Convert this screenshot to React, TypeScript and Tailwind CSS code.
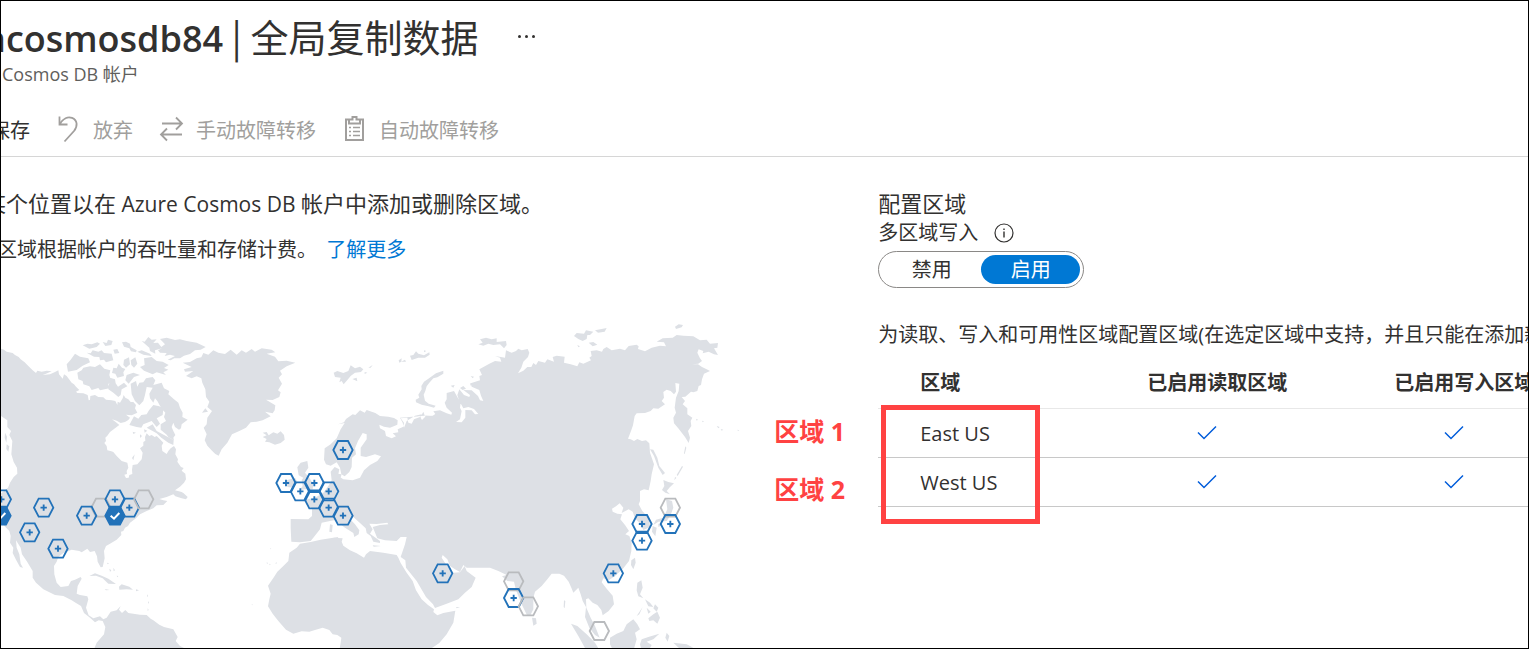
import React from 'react';

type MarkerKind = 'available' | 'selected' | 'unavailable';

interface Marker {
  x: number;
  y: number;
  kind: MarkerKind;
}

// Map coordinates are in thirds of a pixel, origin at the map's top left corner.
const markers: Marker[] = [
  { x: 303, y: 560, kind: 'unavailable' },
  { x: 131, y: 560, kind: 'available' },
  { x: 89, y: 634, kind: 'available' },
  { x: 174, y: 683, kind: 'available' },
  { x: 260, y: 584, kind: 'available' },
  { x: 345, y: 535, kind: 'available' },
  { x: 388, y: 560, kind: 'available' },
  { x: 431, y: 535, kind: 'unavailable' },
  { x: 345, y: 584, kind: 'selected' },
  { x: 4, y: 535, kind: 'available' },
  { x: 3, y: 584, kind: 'selected' },
  { x: 1029, y: 387, kind: 'available' },
  { x: 858, y: 486, kind: 'available' },
  { x: 943, y: 486, kind: 'available' },
  { x: 901, y: 511, kind: 'available' },
  { x: 986, y: 511, kind: 'available' },
  { x: 943, y: 535, kind: 'available' },
  { x: 986, y: 560, kind: 'available' },
  { x: 1029, y: 584, kind: 'available' },
  { x: 1328, y: 757, kind: 'available' },
  { x: 2011, y: 560, kind: 'unavailable' },
  { x: 2011, y: 609, kind: 'available' },
  { x: 1926, y: 609, kind: 'available' },
  { x: 1926, y: 659, kind: 'available' },
  { x: 1840, y: 757, kind: 'available' },
  { x: 1541, y: 781, kind: 'unavailable' },
  { x: 1541, y: 831, kind: 'available' },
  { x: 1585, y: 856, kind: 'unavailable' },
  { x: 1798, y: 930, kind: 'unavailable' },
];

function RegionMarker({ x, y, kind }: Marker) {
  const hex = '-29,0 -15,-27 15,-27 29,0 15,27 -15,27';
  return (
    <g transform={`translate(${x} ${y})`}>
      <polygon
        points={hex}
        fill={kind === 'selected' ? '#2272b9' : 'none'}
        stroke={kind === 'unavailable' ? '#b9bbbe' : '#2272b9'}
        strokeWidth="5.5"
      />
      {kind === 'available' && <path d="M-9.5 0H9.5M0-9.5V9.5" stroke="#2272b9" strokeWidth="5.5" />}
      {kind === 'selected' && <path d="M-13 0L-3 9L13-8" fill="none" stroke="#fff" strokeWidth="6" />}
    </g>
  );
}

function WorldMap() {
  return (
    <svg viewBox="3 0 2280 984" className="block w-[760px] max-w-none shrink-0" role="img" aria-label="世界地图">
      <g fill="#dde0e5">
        {/* North and South America */}
        <path d="M0 82L12 86 20 92 38 96 45 102 56 108 62 115 74 124 85 135 98 148 108 156 112 149 125 152 140 149 155 151 138 158 128 162 150 160 165 153 175 148 177 160 188 173 192 160 200 165 205 172 215 185 222 190 228 197 238 207 228 212 232 216 250 217 263 222 266 238 270 237 271 225 285 222 295 228 310 229 318 236 335 238 346 240 352 252 353 242 360 245 368 232 371 222 376 230 385 235 392 243 400 243 408 252 405 262 412 275 402 280 395 283 378 281 390 290 385 297 375 303 362 306 350 299 336 295 348 304 358 312 345 322 330 333 322 344 316 350 318 360 313 366 320 375 322 388 334 391 340 393 350 405 365 420 382 425 385 440 380 450 381 459 373 461 378 471 386 470 388 462 397 459 396 446 398 432 412 430 425 415 428 395 420 382 430 374 430 363 436 359 435 348 440 337 448 345 455 342 464 348 470 345 480 355 490 365 485 374 487 390 500 399 505 390 512 382 522 375 528 385 526 400 534 415 532 422 543 438 551 441 545 449 556 458 558 475 552 485 540 497 525 508 545 513 551 517 563 528 558 535 545 532 526 526 520 520 500 528 478 534 490 538 502 540 490 552 470 553 460 562 440 570 420 580 408 592 390 605 384 615 375 620 370 630 363 632 364 642 350 656 330 668 318 675 312 690 314 712 308 738 302 739 293 722 291 706 284 690 270 693 262 683 245 694 238 690 215 686 190 696 175 708 170 722 162 735 163 760 170 785 182 798 205 795 213 780 225 776 242 768 245 773 233 795 230 818 240 822 262 826 265 835 258 860 266 883 280 892 300 886 310 895 320 890 332 872 350 868 362 855 357 866 366 876 376 867 385 876 400 878 420 881 440 882 452 893 460 898 478 911 492 918 520 925 533 948 527 960 540 975 556 983 580 990 280 990 290 965 312 940 316 918 308 900 296 898 285 904 270 890 252 876 243 855 228 846 215 838 190 825 165 822 130 805 108 785 98 770 98 750 80 720 66 700 62 680 48 658 50 680 58 700 62 728 69 740 60 738 48 716 38 696 40 680 30 665 32 645 28 630 16 618 0 600V520L24 500 30 485 41 468 52 458 51 440 41 423 34 400 37 360 28 342 33 330 22 318 22 298 12 291 0 283Z" />
        {/* Canadian Arctic */}
        <path d="M200 130L212 116 225 98 240 107 265 112 270 124 248 134 230 147 204 152ZM232 155L245 148 250 140 270 136 285 138 300 130 313 143 331 148 328 162 333 178 325 190 328 202 300 208 295 201 275 207 268 196 250 190 248 180 235 175ZM248 73L262 68 275 70 292 64 300 68 290 78 268 83ZM260 95L272 97 278 88 295 92 305 88 312 96 335 98 340 118 331 120 318 124 312 116 300 118 298 108 282 107ZM308 63L320 66 324 56 338 60 334 72 316 75ZM366 64L378 62 390 68 392 78 410 88 408 94 393 91 388 82 372 77ZM372 116L387 109 390 130 378 140 370 132ZM340 140L350 142 356 128 366 140 376 144 370 154 372 165 352 170 346 158 336 156ZM392 118L406 109 412 128 402 140 394 132ZM425 60L434 62 445 48 455 56 470 55 460 66 474 65 484 78 495 70 480 54 500 50 525 57 540 55 560 60 590 65 617 78 602 86 585 88 570 99 552 104 540 112 523 112 512 118 503 116 525 105 510 101 494 105 500 96 480 95 474 88 486 82 465 88 466 98 450 90 448 80ZM412 92L425 88 450 98 455 105 430 101ZM432 112L455 108 470 120 488 122 506 132 492 141 505 146 490 154 498 162 470 154 458 160 432 149 420 138 434 132ZM380 162L400 155 420 162 402 168 386 188 376 178ZM392 188L408 180 412 197 418 185 430 184 438 172 458 168 466 178 460 192 485 185 492 202 508 210 505 220 522 235 535 245 540 260 548 275 547 288 563 296 545 310 543 322 537 326 525 318 520 305 515 318 520 330 526 342 520 350 522 358 505 348 500 341 482 326 482 310 498 300 492 288 496 275 484 262 472 240 465 232 460 245 450 232 448 218 458 200 440 198 435 222 430 240 418 253 405 240 395 220ZM447 268L460 252 478 256 490 264 488 282 470 292 480 308 470 318 455 300 430 310 424 320 410 318 388 312 402 286 415 293 424 282 440 280ZM440 320L458 310 470 330 488 340 508 350 521 358 520 372 505 365 484 350 470 337ZM330 170L345 175 347 187 354 197 372 185 382 196 365 205 362 222 355 228 340 215 325 205ZM340 86L352 84 358 96 344 98ZM404 400L396 411 400 418Z" />
        <path d="M398 332l10 3-8 4zM420 340l6 5-6 6zM432 325l10 4-8 6zM15 335l6 12-2 18-5-15zM20 370l8 6-3 16-6-8z" />
        {/* Caribbean */}
        <path d="M268 765L285 757 305 764 325 773 348 789 325 788 308 772 288 764ZM357 797L365 790 388 797 399 806 380 805 358 806ZM314 804L329 807 318 808ZM408 805L417 808 408 811ZM321 725l6 2-4 3zM328 743l6 5-4 5zM340 740l5 8-4 3zM350 764l5 1-3 4zM441 820l3 5-3 3zM444 840l3 5-3 3zM443 862l3 5-3 3z" />
        {/* Greenland and Iceland */}
        <path d="M548 125L570 123 590 112 604 109 610 96 625 101 640 88 655 95 675 99 692 86 710 101 725 88 738 95 755 84 765 92 785 82 815 86 826 94 800 98 825 107 835 121 860 119 886 125 860 136 840 149 846 160 836 170 846 188 834 208 842 214 838 228 818 237 798 236 826 253 824 268 818 277 795 272 812 286 788 298 770 302 752 304 738 320 718 330 696 340 682 365 665 385 656 404 646 399 636 389 622 374 614 358 620 340 611 320 620 310 622 290 636 270 622 258 628 242 618 228 616 205 607 185 604 172 590 166 575 172 558 165 580 150 555 152 552 145 575 138Z M606 275L616 262 624 272Z M788 335L800 333 806 343 820 334 832 338 842 331 852 342 854 356 842 366 825 371 808 364 795 362 800 354 788 348 800 343Z" />
        {/* Arctic Ocean islands */}
        <path d="M1001 155L1012 150 1030 156 1045 150 1052 133 1065 142 1080 137 1090 145 1083 153 1065 155 1052 165 1044 175 1031 190 1025 180 1018 184 1022 170 1005 168ZM1057 174L1070 170 1072 181ZM1105 140L1118 132 1112 140ZM1094 153L1102 155 1094 159ZM1196 118L1205 112 1204 122 1218 122 1215 116 1198 125ZM1230 104L1240 102 1248 91 1255 98 1272 103 1288 94 1289 101 1275 110 1255 110 1235 117ZM1272 88L1279 90 1272 94ZM1330 149L1330 158 1312 169 1300 172 1288 185 1280 196 1276 210 1271 221 1275 239 1286 248 1307 254 1302 260 1286 256 1265 251 1248 244 1247 236 1258 230 1255 221 1265 205 1264 195 1272 182 1285 173 1308 157ZM1435 70L1448 65 1440 55 1458 50 1475 55 1490 52 1490 63 1518 60 1520 72 1512 82 1500 70 1480 72 1465 68 1450 74ZM1722 45L1730 36 1752 38 1758 28 1780 32 1770 42 1762 42 1760 54 1748 60 1735 54ZM1785 28L1805 24 1820 21 1814 32 1794 35ZM1766 65L1780 63 1792 71 1778 76ZM2025 17L2036 10 2049 12 2045 19 2028 24ZM1352 194l12-2-4 8zM1380 201l10-6 8 8-10 4zM1410 187l8 2-6 5zM1412 165l10 2-4 5zM1732 72l8 4-5 3z" />
        {/* Europe and Asia */}
        <path d="M1014 310L1032 304 1038 294 1058 280 1066 282 1080 268 1094 275 1100 267 1115 272 1126 276 1140 285 1165 287 1182 291 1193 298 1192 311 1170 320 1152 317 1138 311 1140 322 1155 330 1158 345 1175 352 1188 346 1178 337 1195 334 1193 325 1210 317 1212 305 1202 292 1222 290 1225 305 1235 308 1242 295 1262 287 1270 272 1275 286 1292 283 1200 290 1208 305 1212 320 1220 300 1245 284 1265 280 1262 290 1266 297 1278 285 1298 284 1306 279 1300 271 1320 268 1340 277 1354 281 1356 275 1340 260 1334 245 1340 235 1340 216 1362 210 1372 228 1382 245 1380 260 1385 270 1380 295 1368 303 1385 304 1396 290 1396 267 1415 268 1425 280 1435 279 1422 264 1405 258 1390 262 1378 240 1372 222 1378 205 1392 222 1408 228 1410 222 1390 207 1415 208 1434 225 1440 238 1450 240 1443 224 1438 207 1415 197 1412 187 1440 178 1438 165 1446 162 1438 145 1468 128 1485 120 1504 122 1500 110 1485 105 1515 110 1518 88 1535 95 1548 90 1555 83 1565 88 1583 84 1588 95 1584 108 1570 122 1564 140 1554 157 1570 149 1582 138 1594 138 1600 126 1608 132 1615 120 1635 125 1642 115 1662 122 1658 108 1670 104 1694 107 1692 125 1712 130 1732 136 1738 124 1750 128 1773 118 1768 110 1775 105 1772 90 1790 88 1806 92 1810 84 1820 78 1835 88 1860 83 1875 88 1886 75 1910 71 1916 76 1914 84 1935 91 1955 80 1980 74 1998 76 1992 64 1970 62 1988 52 2018 50 2030 42 2050 44 2080 46 2100 58 2120 56 2130 68 2154 66 2152 80 2142 82 2154 102 2142 100 2126 92 2108 97 2110 90 2096 85 2092 95 2100 112 2106 120 2095 128 2076 130 2094 130 2106 138 2120 145 2130 150 2112 158 2106 175 2103 192 2096 195 2092 210 2080 214 2073 212 2056 227 2045 228 2055 240 2048 250 2062 262 2062 280 2077 290 2072 300 2074 315 2064 330 2070 350 2066 366 2055 348 2036 323 2022 307 2020 290 2028 275 2024 260 2028 230 2036 210 2038 188 2026 186 2028 212 2022 220 2012 210 2000 206 1990 213 1992 230 1985 240 1995 250 1975 263 1960 262 1952 270 1935 276 1910 277 1904 285 1899 313 1893 330 1884 353 1892 355 1902 360 1912 354 1926 360 1938 358 1948 367 1950 395 1962 430 1955 460 1952 480 1946 508 1932 505 1920 510 1920 540 1916 550 1927 570 1945 590 1951 618 1930 627 1922 610 1905 592 1898 572 1886 565 1865 576 1870 560 1859 547 1848 556 1836 563 1838 572 1852 578 1866 580 1861 595 1875 612 1887 630 1876 640 1888 645 1895 665 1894 690 1887 720 1870 742 1845 765 1826 778 1810 772 1805 784 1820 803 1838 824 1842 850 1826 870 1808 883 1804 867 1792 852 1778 845 1765 832 1758 835 1759 860 1772 890 1785 915 1799 950 1785 942 1768 920 1755 888 1758 858 1748 840 1742 820 1735 800 1720 815 1714 800 1706 782 1692 764 1678 758 1655 758 1642 775 1625 795 1605 812 1600 830 1600 865 1590 885 1581 883 1565 850 1548 808 1542 782 1522 780 1506 766 1520 762 1495 750 1470 740 1400 740 1390 732 1380 753 1365 745 1350 735 1342 715 1328 702 1325 710 1340 733 1360 755 1380 754 1394 735 1400 750 1427 770 1415 798 1395 815 1375 835 1340 848 1305 861 1299 850 1278 828 1250 780 1218 740 1216 718 1202 708 1215 670 1220 648 1202 648 1190 660 1155 658 1132 652 1124 632 1118 618 1140 612 1165 610 1162 605 1130 609 1108 608 1118 625 1110 638 1140 660 1140 666 1120 662 1112 645 1100 636 1097 622 1080 606 1060 588 1050 594 1065 610 1078 628 1076 640 1063 648 1060 636 1035 620 1015 605 1002 598 990 600 965 605 960 625 940 650 932 660 900 664 874 662 872 620 872 594 925 595 936 585 936 562 918 550 915 536 945 530 970 515 985 495 995 478 992 452 1004 438 1018 445 1014 464 1030 475 1058 478 1080 470 1092 448 1110 432 1132 420 1143 406 1125 400 1098 408 1082 405 1082 380 1100 355 1100 340 1088 336 1074 360 1065 382 1068 400 1056 410 1055 438 1048 453 1034 466 1024 460 1020 440 1010 424 992 434 978 430 972 416 974 382 992 370 1010 352 1022 325 1034 306Z" />
        <path d="M892 439L902 425 922 420 925 440 915 455 928 470 940 490 938 505 915 505 898 508 908 495 905 478 910 470 896 463ZM860 478L885 470 892 482 880 500 862 498ZM1013 458l12 2-4 12-9-4zM1000 650l15-2-4 8zM1118 673l25 2-22 2zM990 610l8 2-2 22-8-2z" />
        {/* Africa */}
        <path d="M1195 710L1202 726 1220 755 1238 780 1248 808 1265 835 1284 852 1302 865 1300 873 1312 883 1330 876 1366 869 1360 905 1340 940 1318 966 1290 985 1018 990 1022 965 1024 950 1012 942 998 940 988 927 968 920 945 927 928 932 905 931 880 938 858 926 835 900 818 878 804 856 808 835 812 818 804 794 822 768 832 752 850 735 865 720 868 695 890 680 900 668 932 663 962 656 1000 650 1028 652 1025 662 1030 674 1050 688 1070 697 1092 710 1098 700 1110 690 1150 695 1190 702ZM1368 858L1380 859 1370 862ZM810 682l4 1-3 2zM800 724l4 2-3 3zM808 728l4 2-3 3zM826 727l4-4-1 6zM755 850l4 1-3 2z" />
        {/* Pacific coast islands and South-East Asia */}
        <path d="M1950 385L1960 386 1972 410 1978 435 1995 456 1988 462 1975 440 1962 405ZM1990 477L2005 483 2022 487 2010 498 2000 510 2010 520 1996 515 1986 507 1993 495ZM1998 535L2016 540 2020 560 2012 582 2000 600 1975 602 1960 612 1968 596 1990 590 2002 565ZM1958 615L1970 620 1966 646 1956 632ZM1975 608L1988 612 1975 618ZM1894 718L1905 710 1907 725 1900 745 1893 732ZM1912 785L1924 778 1928 800 1920 820 1930 832 1915 826 1910 808ZM1935 835L1950 845 1960 858 1945 856ZM1940 860L1952 872 1945 878ZM1965 850L1975 860 1970 872 1960 862ZM1945 892L1960 880 1972 872 1980 890 1972 908 1960 898 1948 900ZM1910 885L1928 858 1918 880ZM1713 908L1732 915 1760 940 1785 965 1800 990 1760 990 1735 945ZM1830 950L1850 938 1870 930 1880 910 1900 895 1912 910 1920 925 1905 935 1910 955 1900 990 1840 990 1830 970ZM1925 955L1945 948 1965 942 1978 938 1960 955 1940 962 1955 972 1945 990 1925 990 1920 970ZM2000 935L2008 945 2003 962 1996 950ZM2020 965L2060 970 2080 980 2040 984ZM1596 890L1608 892 1610 908 1600 914ZM1692 838l4 2-2 22-3-4zM2088 293l6 3-4 3zM2106 299l6 2-4 3zM2150 315l9 3-4 4zM2162 324l8 2-5 3zM2212 326l6 2-4 2zM2056 376l3 4-5 20-2-3zM2046 435l3 2-16 28-3-3zM2025 468l4 2-6 8z" />
      </g>
      {markers.map((m) => (
        <RegionMarker key={`${m.x}-${m.y}`} {...m} />
      ))}
    </svg>
  );
}

function CommandBar() {
  const item = 'flex items-center whitespace-nowrap text-xl leading-7 text-[#a19f9d]';
  return (
    <div className="-ml-[11px] flex h-14 items-center border-b border-[#d6d6d6]">
      <button type="button" className="pt-1 text-xl leading-7 whitespace-nowrap text-[#323130]">
        保存
      </button>
      <button type="button" disabled className={`ml-[25px] gap-3 ${item}`}>
        <svg viewBox="0 0 26 28" className="h-7 w-[26px]" fill="none" stroke="currentColor" strokeWidth="1.8" aria-hidden="true">
          <path d="M4.5 1.5V9.500H12.500M4.700 9.300C8 3 13 1.500 17 2.800C22.500 5 23 11 19 16L9.500 26.500" />
        </svg>
        <span className="pt-1">放弃</span>
      </button>
      <button type="button" disabled className={`ml-[25px] gap-3 ${item}`}>
        <svg viewBox="0 0 26 28" className="h-7 w-[26px]" fill="none" stroke="currentColor" strokeWidth="1.8" aria-hidden="true">
          <path d="M4 8.500H24M18 2.500L24 8.500L18 14.500M24 19.500H3M9 13.500L3 19.500L9 25.500" />
        </svg>
        <span className="pt-1">手动故障转移</span>
      </button>
      <button type="button" disabled className={`ml-[25px] gap-3 ${item}`}>
        <svg viewBox="0 0 26 28" className="h-7 w-[26px]" fill="none" stroke="currentColor" strokeWidth="2" aria-hidden="true">
          <path d="M8 4.500H5V25H22V4.500H19M8 8.500V4.500H11.500V2H15.500V4.500H19V8.500Z" />
          <path d="M8 12.500H10M12 12.500H19M8 16.500H10M12 16.500H19M8 20.500H10M12 20.500H19" strokeWidth="1.500" />
        </svg>
        <span className="pt-1">自动故障转移</span>
      </button>
    </div>
  );
}

function Check({ label }: { label: string }) {
  return (
    <svg viewBox="0 0 20 16" className="ml-[50px] block h-4 w-5" fill="none" stroke="#015cda" strokeWidth="1.5" role="img" aria-label={label}>
      <path d="M1 7.500L7 13.500L19 1.500" />
    </svg>
  );
}

const regions = ['East US', 'West US'];

function RegionTable() {
  return (
    <div className="relative mt-[9px]">
      <table className="w-[1009px] table-fixed border-collapse text-left text-xl leading-7 text-[#323130]">
        <thead>
          <tr className="h-[50px] border-b border-[#e8e8e8]">
            <th className="w-[269px] pl-[42px] font-bold">区域</th>
            <th className="w-[247px] font-bold">已启用读取区域</th>
            <th className="font-bold">已启用写入区域</th>
          </tr>
        </thead>
        <tbody>
          {regions.map((name) => (
            <tr key={name} className="h-[49px] border-b border-[#c8c8c8]">
              <td className="pt-0.5 pl-[42px]">{name}</td>
              <td>
                <Check label="已启用读取" />
              </td>
              <td>
                <Check label="已启用写入" />
              </td>
            </tr>
          ))}
        </tbody>
      </table>
      <div className="absolute top-[47px] left-[3px] h-[119px] w-[159px] border-5 border-[#ff4242]" />
      <div className="absolute top-[55px] -left-[104px] flex flex-col gap-[22px] text-[25px] leading-9 font-bold whitespace-nowrap text-[#ff4242]">
        <span>区域 1</span>
        <span>区域 2</span>
      </div>
    </div>
  );
}

export default function App() {
  return (
    <div className="h-screen overflow-hidden border border-black bg-white font-['Open_Sans','Noto_Sans_CJK_SC',sans-serif] text-[#323130]">
      <header className="pt-[11px]">
        <div className="-ml-[16px] flex items-center whitespace-nowrap">
          <h1 className="font-['Noto_Sans_CJK_SC',sans-serif] text-[38px] leading-12">
            <span className="font-['Open_Sans',sans-serif] text-4xl font-semibold">acosmosdb84</span> | 全局复制数据
          </h1>
          <button type="button" aria-label="更多" className="ml-10 flex gap-1">
            <span className="size-[3px] rounded-full bg-[#323130]" />
            <span className="size-[3px] rounded-full bg-[#323130]" />
            <span className="size-[3px] rounded-full bg-[#323130]" />
          </button>
        </div>
        <p className="mt-0.5 ml-px text-lg leading-6 whitespace-nowrap text-[#605e5c]">Cosmos DB 帐户</p>
      </header>
      <div className="mt-[15px]">
        <CommandBar />
      </div>
      <main className="flex">
        <section className="w-[57.45%] shrink-0 pt-[30px]">
          <p className="-ml-[17px] text-[22px] leading-8 whitespace-nowrap">
            某个位置以在<span className="text-[21px]"> Azure Cosmos DB </span>帐户中添加或删除区域。
          </p>
          <p className="mt-[14px] -ml-[4px] text-xl leading-8 whitespace-nowrap">
            区域根据帐户的吞吐量和存储计费。{' '}
            <a href="#learn-more" className="ml-1 text-[#0078d4]">
              了解更多
            </a>
          </p>
          <div className="mt-[55px]">
            <WorldMap />
          </div>
        </section>
        <section className="min-w-0 flex-1 pt-[30px]">
          <h2 className="text-[22px] leading-8">配置区域</h2>
          <div className="flex items-center gap-4 text-xl leading-7">
            <span id="multi-write">多区域写入</span>
            <svg viewBox="0 0 20 20" className="size-5" fill="none" stroke="#323130" role="img" aria-label="信息">
              <circle cx="10" cy="10" r="9" strokeWidth="1.2" />
              <path d="M10 8.500V14.500M10 5.500V7" strokeWidth="1.400" />
            </svg>
          </div>
          <div
            role="group"
            aria-labelledby="multi-write"
            className="mt-1 flex h-[37px] w-[206px] rounded-full border border-[#8a8886] p-[3px] text-xl leading-7"
          >
            <button type="button" aria-pressed="false" className="flex-1 rounded-full">
              禁用
            </button>
            <button type="button" aria-pressed="true" className="flex-1 rounded-full bg-[#0078d4] text-white">
              启用
            </button>
          </div>
          <p className="mt-[33px] text-xl leading-7 whitespace-nowrap">
            为读取、写入和可用性区域配置区域(在选定区域中支持，并且只能在添加新区域时进行配置)
          </p>
          <RegionTable />
        </section>
      </main>
    </div>
  );
}
